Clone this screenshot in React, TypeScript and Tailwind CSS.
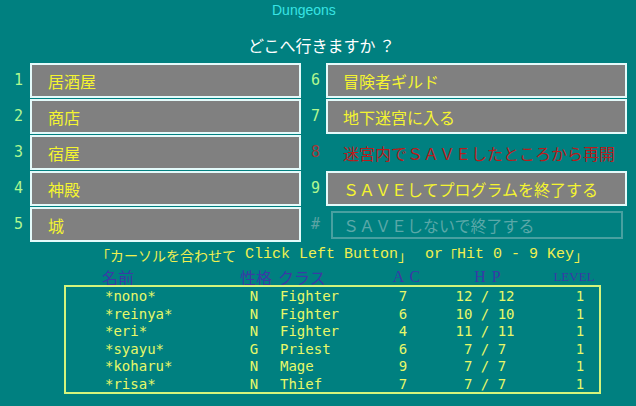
import React from "react";

// font stacks as Tailwind arbitrary values
const JP = "font-['Noto_Sans_CJK_JP',sans-serif]";
const MONO = "font-['DejaVu_Sans_Mono','Noto_Sans_CJK_JP',monospace]";
const LMONO = "font-['Liberation_Mono','Noto_Sans_CJK_JP',monospace]";
const SERIF = "font-['Liberation_Serif','Noto_Sans_CJK_JP',serif]";

type Side = { kind: "button" | "text" | "disabled"; num: string; label: string };

const rows: { left: string; right: Side }[] = [
  { left: "居酒屋", right: { kind: "button", num: "6", label: "冒険者ギルド" } },
  { left: "商店", right: { kind: "button", num: "7", label: "地下迷宮に入る" } },
  { left: "宿屋", right: { kind: "text", num: "8", label: "迷宮内でＳＡＶＥしたところから再開" } },
  { left: "神殿", right: { kind: "button", num: "9", label: "ＳＡＶＥしてプログラムを終了する" } },
  { left: "城", right: { kind: "disabled", num: "#", label: "ＳＡＶＥしないで終了する" } },
];

const party = [
  { name: "*nono*", align: "N", cls: "Fighter", ac: 7, hp: "12 / 12", lv: 1 },
  { name: "*reinya*", align: "N", cls: "Fighter", ac: 6, hp: "10 / 10", lv: 1 },
  { name: "*eri*", align: "N", cls: "Fighter", ac: 4, hp: "11 / 11", lv: 1 },
  { name: "*syayu*", align: "G", cls: "Priest", ac: 6, hp: "7 / 7", lv: 1 },
  { name: "*koharu*", align: "N", cls: "Mage", ac: 9, hp: "7 / 7", lv: 1 },
  { name: "*risa*", align: "N", cls: "Thief", ac: 7, hp: "7 / 7", lv: 1 },
];

const cols = "grid grid-cols-[39px_135px_28px_12px_93px_60px_104px_23px_40px]";
const numCls = `text-right text-[15px] ${MONO}`;

function RightCell({ side }: { side: Side }) {
  if (side.kind === "button") {
    return (
      <>
        <span className={`w-[25px] pr-[6px] text-[#b0f890] ${numCls}`}>{side.num}</span>
        <div
          className={`flex h-full w-[301px] items-center border-2 border-[#e4fafa] bg-[#808080] pl-[15px] text-[16px] text-[#f4f430] ${JP}`}
        >
          {side.label}
        </div>
      </>
    );
  }
  if (side.kind === "text") {
    return (
      <>
        <span className={`w-[25px] pr-[6px] text-[#a03838] ${numCls}`}>{side.num}</span>
        <div className={`flex h-full w-[301px] items-center pl-[17px] text-[16px] text-[#b81c1c] ${JP}`}>
          {side.label}
        </div>
      </>
    );
  }
  return (
    <>
      <span className={`w-[25px] pr-[6px] text-[#5aa4a4] ${numCls}`}>{side.num}</span>
      <div
        className={`ml-[5px] flex h-[28px] w-[292px] items-center border-2 border-[#48a0a0] pl-[10px] text-[16px] text-[#5aa8a8] ${JP}`}
      >
        {side.label}
      </div>
    </>
  );
}

export default function App() {
  return (
    <div className="flex h-[406px] w-[636px] flex-col overflow-hidden bg-[#008080]">
      <div className="h-[20px] pl-[272px] font-['Liberation_Sans',sans-serif] text-[14px] leading-[20px] text-[#38e4e4]">
        Dungeons
      </div>
      <div className={`mt-[15px] h-[20px] pl-[248px] text-[16px] leading-[20px] text-white ${JP}`}>
        どこへ行きますか ？
      </div>

      <div className="mt-[8px] flex flex-col gap-[1px]">
        {rows.map((r, i) => (
          <div key={r.left} className="flex h-[35px] items-center">
            <span className={`w-[30px] pr-[7px] text-[#b0f890] ${numCls}`}>{i + 1}</span>
            <div
              className={`flex h-full w-[271px] items-center border-2 border-[#e4fafa] bg-[#808080] pl-[16px] text-[16px] text-[#f4f430] ${JP}`}
            >
              {r.left}
            </div>
            <RightCell side={r.right} />
          </div>
        ))}
      </div>

      <div className="mt-[5px] flex h-[16px] items-center whitespace-pre pl-[96px] text-[#f0f050]">
        <span className={`text-[14px] ${JP}`}>「カーソルを合わせて</span>
        <span className={`text-[15px] ${LMONO}`}> Click Left Button</span>
        <span className={`text-[14px] ${JP}`}>」</span>
        <span className={`ml-[4px] text-[15px] ${LMONO}`}> or</span>
        <span className={`text-[14px] ${JP}`}>「</span>
        <span className={`text-[15px] ${LMONO}`}>Hit 0 - 9 Key</span>
        <span className={`text-[14px] ${JP}`}>」</span>
      </div>

      <div className={`mt-[6px] ml-[64px] h-[16px] pl-[2px] leading-[16px] text-[#3a3aa6] ${cols}`}>
        <span />
        <span className={`-ml-[3px] text-[16px] ${JP}`}>名前</span>
        <span className={`whitespace-nowrap text-center text-[16px] ${JP}`}>性格</span>
        <span />
        <span className={`-ml-[2px] text-[16px] ${JP}`}>クラス</span>
        <span className={`pl-[8px] text-center text-[16px] tracking-[1px] ${SERIF}`}>A C</span>
        <span className={`pl-[6px] text-center text-[16px] tracking-[1px] ${SERIF}`}>H P</span>
        <span />
        <span className={`-ml-[12px] text-center text-[13px] ${SERIF}`}>LEVEL</span>
      </div>

      <div className="ml-[64px] h-[109px] w-[537px] border-2 border-[#d4f47c] pt-[1px]">
        {party.map((p) => (
          <div key={p.name} className={`h-[17.5px] text-[14px] leading-[17.5px] text-[#e8f868] ${MONO} ${cols}`}>
            <span />
            <span>{p.name}</span>
            <span className="text-center">{p.align}</span>
            <span />
            <span>{p.cls}</span>
            <span className="text-center">{p.ac}</span>
            <span className="text-center">{p.hp}</span>
            <span />
            <span className="text-center">{p.lv}</span>
          </div>
        ))}
      </div>
    </div>
  );
}
